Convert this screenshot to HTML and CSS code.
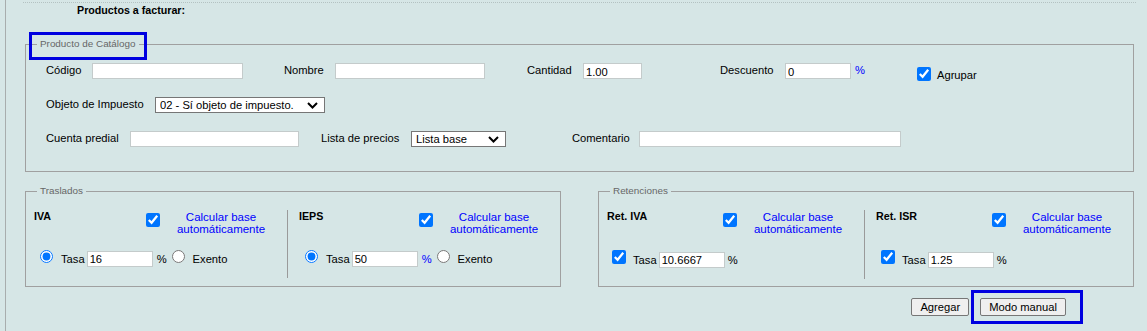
FILE: index.html
```html
<!DOCTYPE html>
<html lang="es">

<head>
  <meta charset="UTF-8">
  <meta name="viewport" content="width=device-width, initial-scale=1.0">
  <title>Productos a facturar</title>
  <link rel="stylesheet" href="styles.css">
</head>

<body>
  <div class="page">
    <div class="content">
      <div class="section-head">
        <h3>Productos a facturar:</h3>
      </div>

      <fieldset class="box catalog">
        <legend class="marked marked-legend">Producto de Catálogo</legend>

        <div class="row">
          <label class="lbl lbl-codigo" for="codigo">Código</label>
          <input type="text" id="codigo" class="txt in-codigo">
          <label class="lbl lbl-nombre" for="nombre">Nombre</label>
          <input type="text" id="nombre" class="txt in-nombre">
          <label class="lbl lbl-cantidad" for="cantidad">Cantidad</label>
          <input type="text" id="cantidad" class="txt in-cantidad" value="1.00">
          <label class="lbl lbl-descuento" for="descuento">Descuento</label>
          <input type="text" id="descuento" class="txt in-descuento" value="0">
          <span class="pct pct-blue">%</span>
          <span class="agrupar">
            <input type="checkbox" id="agrupar" class="chk" checked>
            <label for="agrupar">Agrupar</label>
          </span>
        </div>

        <div class="row">
          <label class="lbl lbl-objeto" for="objeto">Objeto de Impuesto</label>
          <span class="sel-wrap sel-objeto">
            <select id="objeto" class="sel">
              <option>02 - Sí objeto de impuesto.</option>
            </select>
            <svg class="chevron" width="11" height="7" viewBox="0 0 11 7"><path d="M1 1l4.5 4.5L10 1" fill="none" stroke="#000" stroke-width="2"/></svg>
          </span>
        </div>

        <div class="row">
          <label class="lbl lbl-cuenta" for="cuenta">Cuenta predial</label>
          <input type="text" id="cuenta" class="txt in-cuenta">
          <label class="lbl lbl-lista" for="lista">Lista de precios</label>
          <span class="sel-wrap sel-lista">
            <select id="lista" class="sel">
              <option>Lista base</option>
            </select>
            <svg class="chevron" width="11" height="7" viewBox="0 0 11 7"><path d="M1 1l4.5 4.5L10 1" fill="none" stroke="#000" stroke-width="2"/></svg>
          </span>
          <label class="lbl lbl-comentario" for="comentario">Comentario</label>
          <input type="text" id="comentario" class="txt in-comentario">
        </div>
      </fieldset>

      <div class="taxes">
        <fieldset class="box half">
          <legend>Traslados</legend>
          <div class="cols cols-traslados">
            <div class="col">
              <div class="tax-head">
                <span class="tax-name">IVA</span>
                <input type="checkbox" class="chk chk-head" checked>
                <span class="calc">Calcular base automáticamente</span>
              </div>
              <div class="tasa-row">
                <input type="radio" name="iva" class="rad rad-tasa" checked><span class="tasa-lbl">Tasa</span><input type="text" class="txt in-tasa" value="16"><span class="pct">%</span><input type="radio" name="iva" class="rad rad-exento"><span>Exento</span>
              </div>
            </div>
            <div class="col">
              <div class="tax-head">
                <span class="tax-name">IEPS</span>
                <input type="checkbox" class="chk chk-head" checked>
                <span class="calc">Calcular base automáticamente</span>
              </div>
              <div class="tasa-row">
                <input type="radio" name="ieps" class="rad rad-tasa" checked><span class="tasa-lbl">Tasa</span><input type="text" class="txt in-tasa" value="50"><span class="pct pct-blue">%</span><input type="radio" name="ieps" class="rad rad-exento"><span>Exento</span>
              </div>
            </div>
          </div>
        </fieldset>

        <fieldset class="box half">
          <legend>Retenciones</legend>
          <div class="cols cols-retenciones">
            <div class="col">
              <div class="tax-head">
                <span class="tax-name">Ret. IVA</span>
                <input type="checkbox" class="chk chk-head" checked>
                <span class="calc">Calcular base automáticamente</span>
              </div>
              <div class="tasa-row">
                <input type="checkbox" class="chk chk-tasa" checked><span class="tasa-lbl">Tasa</span><input type="text" class="txt in-tasa" value="10.6667"><span class="pct pct-ret">%</span>
              </div>
            </div>
            <div class="col">
              <div class="tax-head">
                <span class="tax-name">Ret. ISR</span>
                <input type="checkbox" class="chk chk-head" checked>
                <span class="calc">Calcular base automáticamente</span>
              </div>
              <div class="tasa-row">
                <input type="checkbox" class="chk chk-tasa" checked><span class="tasa-lbl">Tasa</span><input type="text" class="txt in-tasa" value="1.25"><span class="pct pct-ret">%</span>
              </div>
            </div>
          </div>
        </fieldset>
      </div>

      <div class="actions">
        <button type="button" class="btn">Agregar</button>
        <span class="marked marked-btn"><button type="button" class="btn">Modo manual</button></span>
      </div>
    </div>
  </div>
</body>

</html>
```

FILE: styles.css
```css
body {
  margin: 0;
  padding: 0;
  background-color: #d6e6e6;
  font-family: "Liberation Sans", Arial, sans-serif;
  font-size: 11.2px;
  color: #000;
}

.page {
  margin-left: 5px;
  border-left: 1px solid #a8adad;
  min-height: 331px;
  padding: 2px 0 0 19px;
  box-sizing: border-box;
}

.content {
  width: 1109px;
}

/* header */
.section-head {
  margin: 0 -2px;
  border-top: 1px dotted #b4c2c2;
}

.section-head h3 {
  margin: 0;
  padding-left: 54px;
  font-size: 10.7px;
  line-height: 14px;
  font-weight: bold;
}

/* fieldsets */
.box {
  margin: 0;
  padding: 0;
  border: 1px solid #a0a0a0;
  min-width: 0;
}

.box legend {
  margin-left: 11px;
  padding: 0 3px;
  font-size: 9.9px;
  line-height: 12px;
  color: #666;
}

.catalog {
  margin-top: 21px;
  padding: 13px 0 24px 0;
}

.catalog .row {
  padding-left: 20px;
}

/* annotation frames */
.marked {
  position: relative;
}

.marked::after {
  content: "";
  position: absolute;
  border: 3px solid #0000e0;
  pointer-events: none;
}

.marked-legend::after {
  left: -8px;
  right: -8px;
  top: -6px;
  bottom: -10px;
}

.marked-btn::after {
  left: -9px;
  right: -17px;
  top: -8px;
  bottom: -8px;
}

/* catalog rows */
.row {
  display: flex;
  align-items: flex-start;
  height: 16px;
}

.row + .row {
  margin-top: 18px;
}

.lbl {
  flex: none;
  line-height: 14px;
  white-space: nowrap;
}

.txt {
  flex: none;
  height: 16px;
  box-sizing: border-box;
  margin: 0;
  padding: 1px 2px 0;
  border: 1px solid #c4cbcb;
  background: #fff;
  font-family: inherit;
  font-size: 11.2px;
  color: #000;
  outline: none;
}

.sel-wrap {
  position: relative;
  flex: none;
  display: block;
  height: 16px;
}

.sel {
  appearance: none;
  width: 100%;
  height: 16px;
  box-sizing: border-box;
  margin: 0;
  padding: 0 18px 0 4px;
  border: 1px solid #767676;
  border-radius: 0;
  background: #fff;
  font-family: inherit;
  font-size: 11.2px;
  color: #000;
}

.chevron {
  position: absolute;
  right: 7px;
  top: 5px;
  pointer-events: none;
}

.lbl-codigo { width: 46px; }
.in-codigo { width: 151px; margin-right: 41px; }
.lbl-nombre { width: 51px; }
.in-nombre { width: 150px; margin-right: 42px; }
.lbl-cantidad { width: 56px; }
.in-cantidad { width: 59px; margin-right: 78px; }
.lbl-descuento { width: 65px; }
.in-descuento { width: 66px; }

.lbl-objeto { width: 109px; }
.sel-objeto { width: 170px; }

.lbl-cuenta { width: 84px; }
.in-cuenta { width: 169px; margin-right: 22px; }
.lbl-lista { width: 90px; }
.sel-lista { width: 95px; margin-right: 66px; }
.lbl-comentario { width: 67px; }
.in-comentario { width: 262px; }

.pct {
  margin-left: 4px;
  line-height: 14px;
}

.pct-blue {
  color: #0000ff;
}

.pct-ret {
  margin-left: 3px;
}

.agrupar {
  display: flex;
  align-items: flex-end;
  margin: 4px 0 0 52px;
}

.agrupar label {
  margin-left: 6px;
  line-height: 12px;
}

.chk {
  width: 14px;
  height: 14px;
  margin: 0;
}

/* taxes */
.taxes {
  display: flex;
  justify-content: space-between;
  margin-top: 13px;
}

.half {
  width: 536px;
  box-sizing: border-box;
  padding: 13px 0 7px;
}

.cols {
  display: grid;
}

.cols-traslados {
  grid-template-columns: 261px 1fr;
}

.cols-retenciones {
  grid-template-columns: 265px 1fr;
}

.col {
  padding: 0 9px 11px 8px;
}

.col + .col {
  border-left: 1px solid #9a9a9a;
  padding-left: 11px;
}

.tax-head {
  display: grid;
  grid-template-columns: 1fr 20px 114px;
  align-items: start;
}

.tax-name {
  font-weight: bold;
  font-size: 10.7px;
  line-height: 13px;
}

.chk-head {
  margin: 3px 0 0 2px;
}

.calc {
  text-align: center;
  color: #0000ff;
  font-size: 11.5px;
  line-height: 12px;
  padding-top: 1px;
}

.tasa-row {
  margin-top: 15px;
  white-space: nowrap;
}

.rad {
  width: 13px;
  height: 13px;
  margin: 0;
}

.rad-tasa {
  margin: 0 8px 0 6px;
}

.rad-exento {
  margin: 0 8px 0 5px;
}

.chk-tasa {
  margin: 0 7px 0 5px;
}

.in-tasa {
  width: 66px;
  margin-left: 2px;
  vertical-align: baseline;
}

/* buttons */
.actions {
  display: flex;
  justify-content: flex-end;
  gap: 11px;
  margin-top: 11px;
  padding-right: 68px;
}

.btn {
  height: 18px;
  padding: 0 8px;
  border: 1px solid #767676;
  border-radius: 2px;
  background-color: #efefef;
  font-family: inherit;
  font-size: 11.2px;
  color: #000;
}
```
